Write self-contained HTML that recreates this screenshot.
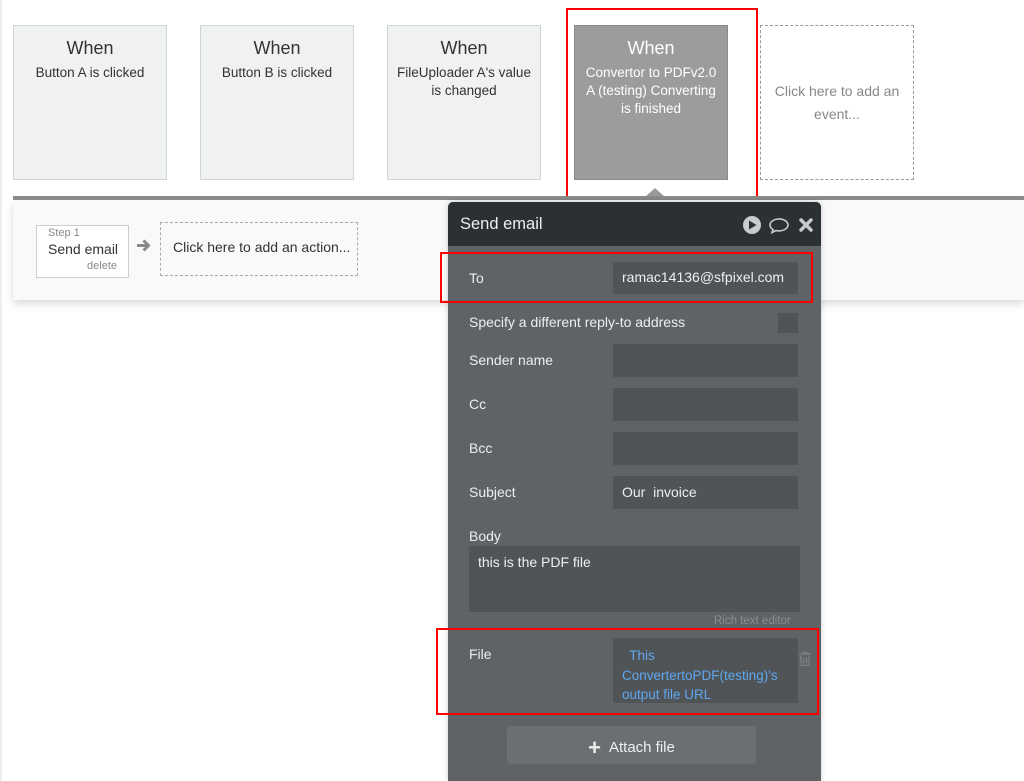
<!DOCTYPE html>
<html><head><meta charset="utf-8"><style>
*{box-sizing:border-box;margin:0;padding:0}
body{width:1024px;height:781px;background:#fff;font-family:"Liberation Sans",sans-serif;position:relative;overflow:hidden}
.a{position:absolute}
.ev{position:absolute;top:25px;width:154px;height:155px;background:#f0f1f1;border:1px solid #cfd6d9;text-align:center;color:#333}
.ev .w{font-size:18px;margin-top:12px;color:#333}
.ev .t{font-size:13.5px;line-height:18px;margin-top:5px;padding:0 6px}
.lbl{position:absolute;left:469px;color:#eee;font-size:14px}
.inp{position:absolute;left:613px;width:185px;height:33px;background:#505456;color:#eee;font-size:14px;padding:8px 9px}
.red{position:absolute;border:2px solid #f00}
</style></head><body>
<div class="a" style="left:0;top:0;width:2px;height:781px;background:#eee"></div>
<div class="ev" style="left:13px"><div class="w">When</div><div class="t">Button A is clicked</div></div>
<div class="ev" style="left:200px"><div class="w">When</div><div class="t">Button B is clicked</div></div>
<div class="ev" style="left:387px"><div class="w">When</div><div class="t">FileUploader A's value is changed</div></div>
<div class="ev" style="left:574px;background:#9c9c9c;border-color:#8a8a8a;color:#fff"><div class="w" style="color:#fff">When</div><div class="t">Convertor to PDFv2.0 A (testing) Converting is finished</div></div>
<div class="ev" style="left:760px;background:#fff;border:1px dashed #999;color:#888"><div class="t" style="margin-top:54px;font-size:14px;line-height:23px;color:#888">Click here to add an event...</div></div>
<div class="red" style="left:566px;top:8px;width:192px;height:190px"></div>
<div class="a" style="left:645px;top:188px;width:0;height:0;border-left:10px solid transparent;border-right:10px solid transparent;border-bottom:9px solid #999"></div>
<div class="a" style="left:13px;top:196px;width:1011px;height:4px;background:#8c8c8c"></div>
<div class="a" style="left:13px;top:200px;width:1011px;height:100px;background:#f9f9f9;box-shadow:0 4px 8px rgba(0,0,0,.15)"></div>
<div class="a" style="left:36px;top:225px;width:93px;height:53px;border:1px solid #c9cfd2;background:#fff">
<div class="a" style="left:11px;top:1px;font-size:11px;color:#888">Step 1</div>
<div class="a" style="left:11px;top:15px;font-size:14px;color:#333">Send email</div>
<div class="a" style="right:11px;top:34px;font-size:11px;color:#888">delete</div></div>
<svg class="a" style="left:136px;top:238px" width="16" height="15" viewBox="0 0 16 15"><path d="M1 7.5h11M7.5 2.5l5 5-5 5" fill="none" stroke="#888" stroke-width="3"/></svg>
<div class="a" style="left:160px;top:222px;width:198px;height:54px;border:1px dashed #aaa;font-size:14px;color:#333;padding:16px 0 0 12px">Click here to add an action...</div>

<div class="a" style="left:448px;top:202px;width:373px;height:579px;background:#5f6366;border-radius:5px 5px 0 0;box-shadow:0 0 6px rgba(0,0,0,.2)"></div>
<div class="a" style="left:448px;top:202px;width:373px;height:44px;background:#2b3033;border-radius:5px 5px 0 0"></div>
<div class="a" style="left:460px;top:215px;font-size:16.5px;color:#eee">Send email</div>
<svg class="a" style="left:742px;top:215px" width="76" height="22" viewBox="0 0 76 22">
<circle cx="10" cy="10" r="9" fill="#c8cbcc"/><path d="M7 5.5v9l7.5-4.5z" fill="#2b3033"/>
<path d="M37 4c-5 0-9 2.700-9 6 0 1.800 1.200 3.400 3 4.500l-1 3 4-2c1 .3 2 .4 3 .4 5 0 9-2.700 9-6s-4-6-9-6z" fill="none" stroke="#c8cbcc" stroke-width="1.6"/>
<path d="M59 5l10 10M69 5L59 15" stroke="#c8cbcc" stroke-width="3.5" stroke-linecap="round"/></svg>

<div class="lbl" style="top:270px">To</div>
<div class="inp" style="top:262px;height:32px;padding-top:7px">ramac14136@sfpixel.com</div>
<div class="red" style="left:440px;top:252px;width:373px;height:51px"></div>
<div class="lbl" style="top:314px">Specify a different reply-to address</div>
<div class="a" style="left:778px;top:313px;width:20px;height:20px;background:#505456"></div>
<div class="lbl" style="top:352px">Sender name</div><div class="inp" style="top:344px"></div>
<div class="lbl" style="top:396px">Cc</div><div class="inp" style="top:388px"></div>
<div class="lbl" style="top:440px">Bcc</div><div class="inp" style="top:432px"></div>
<div class="lbl" style="top:484px">Subject</div><div class="inp" style="top:476px">Our&nbsp; invoice</div>
<div class="lbl" style="top:528px">Body</div>
<div class="a" style="left:469px;top:546px;width:331px;height:66px;background:#505456;color:#eee;font-size:14px;padding:8px 9px">this is the PDF file</div>
<div class="a" style="left:714px;top:615px;font-size:11.5px;color:#8a8e90">Rich text editor</div>
<div class="lbl" style="top:646px">File</div>
<div class="inp" style="top:638px;height:65px;color:#5fa7ef;padding:8px 9px;line-height:19.5px;font-size:13.5px">&nbsp; This ConvertertoPDF(testing)'s output file URL</div>
<svg class="a" style="left:798px;top:651px" width="14" height="16" viewBox="0 0 14 16"><path d="M1 3h12M5 3V1.5h4V3M2.5 4.5l.8 10h7.400l.8-10M5.500 6.500v6M8.500 6.500v6" fill="none" stroke="#7c8083" stroke-width="1.3"/></svg>
<div class="red" style="left:436px;top:628px;width:383px;height:87px"></div>
<div class="a" style="left:507px;top:726px;width:249px;height:38px;background:#6b6f72;border-radius:3px;color:#eee;font-size:15px;text-align:center;padding-top:9px"><span style="font-size:22px;font-weight:bold;vertical-align:-3px;margin-right:8px">+</span>Attach file</div>
</body></html>
